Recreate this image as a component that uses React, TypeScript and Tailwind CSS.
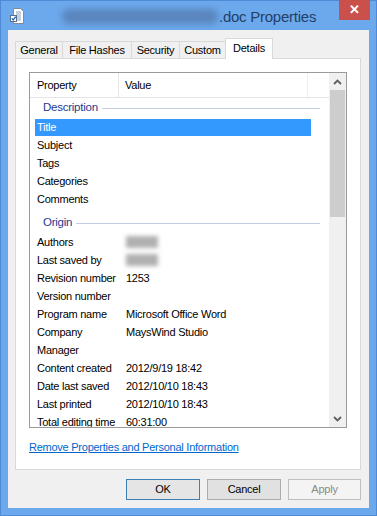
const description = ['Title', 'Subject', 'Tags', 'Categories', 'Comments']

const origin: [string, string][] = [
  ['Authors', '*'],
  ['Last saved by', '*'],
  ['Revision number', '1253'],
  ['Version number', ''],
  ['Program name', 'Microsoft Office Word'],
  ['Company', 'MaysWind Studio'],
  ['Manager', ''],
  ['Content created', '2012/9/19 18:42'],
  ['Date last saved', '2012/10/10 18:43'],
  ['Last printed', '2012/10/10 18:43'],
  ['Total editing time', '60:31:00'],
]

const tabs = [
  { label: 'General', w: 'w-[48px]' },
  { label: 'File Hashes', w: 'w-[70px]' },
  { label: 'Security', w: 'w-[49px]' },
  { label: 'Custom', w: 'w-[47px]' },
]

const DocIcon = () => (
  <svg width="16" height="16" viewBox="0 0 16 16">
    <path d="M3.5 0.5h7l3 3v12h-10z" fill="#fff" stroke="#7d8a99" />
    <path d="M6 4h5M6 6h5M6 8h5M6 10h5M6 12h5" stroke="#8aa0bd" strokeWidth="1" />
    <rect x="0.5" y="7.5" width="6" height="6" fill="#fff" stroke="#5a6f8a" />
    <path d="M1.8 10.4l1.4 1.6 2.6-3.4" fill="none" stroke="#2f66b8" strokeWidth="1.4" />
  </svg>
)

const Chevron = ({ up }: { up?: boolean }) => (
  <svg width="9" height="6" viewBox="0 0 9 6">
    <path d={up ? 'M1 5l3.5-3.5L8 5' : 'M1 1l3.5 3.5L8 1'} fill="none" stroke="#606060" strokeWidth="1.8" />
  </svg>
)

const Group = ({ label, first }: { label: string; first?: boolean }) => (
  <div className={`flex items-center h-[20px] shrink-0 pl-[13px] pr-[9px] ${first ? '' : 'mt-[5px]'}`}>
    <span className="text-[#1e3a8f] text-[11.5px]">{label}</span>
    <div className="flex-1 ml-[4px] h-px bg-[#c5cbe3]" />
  </div>
)

const Blur = () => <div className="w-[32px] h-[12px] bg-[#b0b0b0] blur-[2px]" />

export default function App() {
  return (
    <div className="w-[377px] h-[516px] bg-[#6ca8ec] border border-[#4f8ad6] flex flex-col font-['Liberation_Sans',Arial,sans-serif] text-[11px] tracking-[-0.25px] text-black">
      {/* title bar */}
      <div className="h-[29px] flex items-start">
        <div className="mt-[7px] ml-[9px]">
          <DocIcon />
        </div>
        <div className="mt-[8px] ml-[36px] w-[156px] h-[15px] bg-[#5a85bd] blur-[3px] rounded-full" />
        <span className="mt-[5px] ml-[1px] text-[15px] text-[#243f66]">.doc Properties</span>
        <div className="ml-auto mr-[6px] -mt-px w-[31px] h-[20px] bg-[#c9504b] flex items-center justify-center text-white text-[13px] font-bold">
          ✕
        </div>
      </div>

      {/* client */}
      <div className="mx-[7px] w-[361px] h-[478px] bg-[#f0f0f0] pl-[7px] pr-[8px] flex flex-col">
        {/* tabs */}
        <div className="mt-[8px] h-[20px] flex items-end">
          {tabs.map((t) => (
            <div
              key={t.label}
              className={`${t.w} h-[17px] -mr-px border border-b-0 border-[#d9d9d9] bg-[#f0f0f0] flex items-center justify-center`}
            >
              {t.label}
            </div>
          ))}
          <div className="w-[48px] h-[21px] -mb-px relative z-10 border border-b-0 border-[#d9d9d9] bg-white flex items-center justify-center pb-[2px]">
            Details
          </div>
        </div>

        {/* panel */}
        <div className="h-[412px] border border-[#d9d9d9] bg-white px-[13px] pt-[13px] flex flex-col">
          <div className="w-[318px] h-[356px] border border-[#9a9a9a] flex overflow-hidden">
            <div className="flex-1 flex flex-col overflow-hidden">
              <div className="h-[25px] shrink-0 flex items-stretch border-b border-[#e5e5e5]">
                <div className="w-[89px] pl-[7px] flex items-center border-r border-[#e5e5e5]">Property</div>
                <div className="w-[189px] pl-[6px] flex items-center border-r border-[#eeeeee]">Value</div>
              </div>
              <Group label="Description" first />
              {description.map((d) => (
                <div key={d} className="h-[18px] shrink-0 flex items-center">
                  {d === 'Title' ? (
                    <div className="ml-[5px] w-[276px] h-[17px] bg-[#3399ff] text-white flex items-center pl-[2px]">
                      {d}
                    </div>
                  ) : (
                    <span className="pl-[7px]">{d}</span>
                  )}
                </div>
              ))}
              <Group label="Origin" />
              {origin.map(([k, v]) => (
                <div key={k} className="h-[18px] shrink-0 flex items-center">
                  <span className="w-[96px] pl-[7px]">{k}</span>
                  {v === '*' ? <Blur /> : <span>{v}</span>}
                </div>
              ))}
            </div>
            {/* scrollbar */}
            <div className="w-[17px] bg-[#f0f0f0] flex flex-col">
              <div className="h-[17px] flex items-center justify-center">
                <Chevron up />
              </div>
              <div className="mx-px h-[127px] bg-[#cdcdcd]" />
              <div className="flex-1" />
              <div className="h-[17px] flex items-center justify-center">
                <Chevron />
              </div>
            </div>
          </div>
          <a className="mt-[13px] text-[#0066cc] underline leading-[13px] w-fit">
            Remove Properties and Personal Information
          </a>
        </div>

        {/* buttons */}
        <div className="mt-[9px] flex justify-end gap-[7px]">
          <div className="w-[74px] h-[21px] border border-[#3c7fb1] bg-[#e5e5e5] flex items-center justify-center">OK</div>
          <div className="w-[74px] h-[21px] border border-[#adadad] bg-[#e1e1e1] flex items-center justify-center">Cancel</div>
          <div className="w-[73px] h-[21px] border border-[#bfbfbf] bg-[#f4f4f4] text-[#8a8a8a] flex items-center justify-center">Apply</div>
        </div>
      </div>
    </div>
  )
}
